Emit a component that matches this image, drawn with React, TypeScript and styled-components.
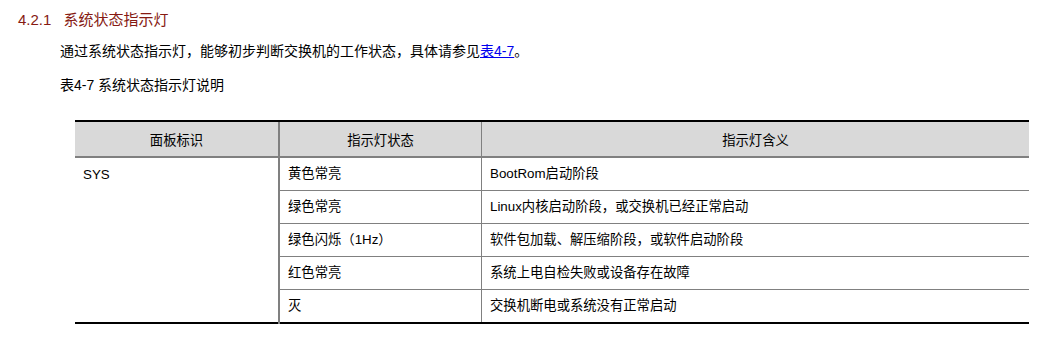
import React, { FC } from 'react'
import styled, { createGlobalStyle } from 'styled-components'

const GlobalStyle = createGlobalStyle`
    body {
        margin: 0;
        background: #fff;
        font-family: "Liberation Sans", "Noto Sans CJK SC", sans-serif;
        color: #000;
    }
`

const Page = styled.div`
    width: 1058px;
    height: 351px;
    padding-top: 9px;
    box-sizing: border-box;
    overflow: hidden;
`

const Heading = styled.h4`
    margin: 0 0 0 18px;
    font-size: 15px;
    font-weight: normal;
    line-height: 22px;
    color: #861a12;
`

const Num = styled.span`
    margin-right: 12px;
`

const Para = styled.p`
    margin: 10px 0 0 60px;
    font-size: 14px;
    line-height: 20px;
`

const Link = styled.a`
    color: #0000ee;
    text-decoration: underline;
`

const Caption = styled.p`
    margin: 14px 0 0 60px;
    font-size: 14px;
    line-height: 20px;
`

const Table = styled.table`
    margin: 25px 0 0 75px;
    width: 954px;
    border-collapse: collapse;
    font-size: 13.33px;
    border-bottom: 2px solid #000;
`

// $edge: left border width, 0 for the first column
const Th = styled.th<{ $w?: number; $edge: number }>`
    width: ${p => (p.$w ? `${p.$w}px` : 'auto')};
    height: 34px;
    padding: 0;
    background: #d9d9d9;
    font-weight: normal;
    text-align: center;
    border-top: 2px solid #000;
    border-bottom: 2px solid #808080;
    border-left: ${p => p.$edge}px solid #808080;
`

const Td = styled.td<{ $top?: boolean; $edge: number }>`
    height: 32px;
    padding: ${p => (p.$top ? '8px 8px 0' : '0 8px')};
    vertical-align: ${p => (p.$top ? 'top' : 'middle')};
    border-top: 1px solid #808080;
    border-left: ${p => p.$edge}px solid #808080;
    line-height: 18px;
    tr:first-child > & { border-top: none; }
`

const rows = [
    ['黄色常亮', 'BootRom启动阶段'],
    ['绿色常亮', 'Linux内核启动阶段，或交换机已经正常启动'],
    ['绿色闪烁（1Hz）', '软件包加载、解压缩阶段，或软件启动阶段'],
    ['红色常亮', '系统上电自检失败或设备存在故障'],
    ['灭', '交换机断电或系统没有正常启动'],
]

const App: FC = () => (
    <>
        <GlobalStyle />
        <Page>
            <Heading><Num>4.2.1</Num>系统状态指示灯</Heading>
            <Para>
                通过系统状态指示灯，能够初步判断交换机的工作状态，具体请参见<Link href="#t47">表4-7</Link>。
            </Para>
            <Caption>表4-7 系统状态指示灯说明</Caption>
            <Table>
                <thead>
                    <tr>
                        <Th $w={203} $edge={0}>面板标识</Th>
                        <Th $w={201} $edge={2}>指示灯状态</Th>
                        <Th $edge={1}>指示灯含义</Th>
                    </tr>
                </thead>
                <tbody>
                    {rows.map((r, i) => (
                        <tr key={r[0]}>
                            {i === 0 && <Td rowSpan={5} $top $edge={0}>SYS</Td>}
                            <Td $edge={2}>{r[0]}</Td>
                            <Td $edge={1}>{r[1]}</Td>
                        </tr>
                    ))}
                </tbody>
            </Table>
        </Page>
    </>
)

export default App
